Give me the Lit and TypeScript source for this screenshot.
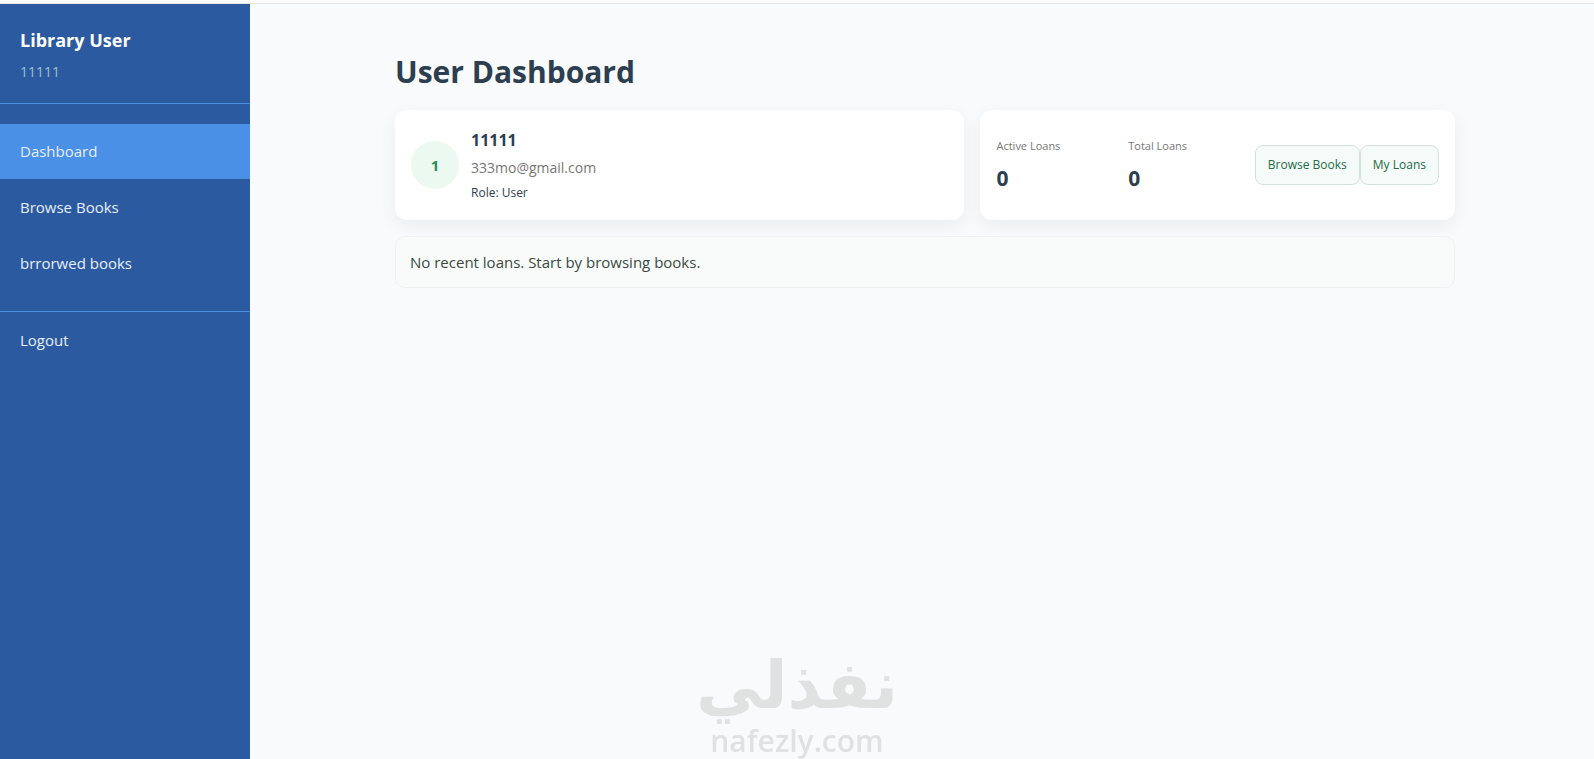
import { LitElement, html, css } from "lit";
import { customElement, state } from "lit/decorators.js";

@customElement("app-root")
export class AppRoot extends LitElement {
  @state() private active = "Dashboard";

  private links = ["Dashboard", "Browse Books", "brrorwed books"];

  static styles = css`
    :host {
      display: flex;
      flex-direction: column;
      min-height: 100vh;
      box-sizing: border-box;
      border-top: 3px solid #fbfbfc;
      background: #f9fafc;
      color: #2c3e50;
      font: 15px/24px "Open Sans", "Noto Sans", sans-serif;
    }
    * {
      box-sizing: border-box;
      margin: 0;
    }
    .shell {
      display: flex;
      flex: 1;
      border-top: 1px solid #e4e5e7;
    }
    .sidebar {
      width: 250px;
      flex: none;
      background: #2c5aa0;
      color: #e6eefa;
    }
    .head {
      padding: 24px 20px 20px;
      border-bottom: 1px solid #4a90e2;
    }
    .brand {
      color: #fff;
      font-size: 18px;
      line-height: 24px;
      font-weight: 700;
    }
    .uid {
      margin-top: 8px;
      font-size: 14px;
      line-height: 23px;
      color: #9cc0cf;
    }
    .nav {
      display: flex;
      flex-direction: column;
      gap: 1px;
      padding: 20px 0;
    }
    .link {
      display: block;
      padding: 16px 20px;
      line-height: 23px;
      color: inherit;
      text-decoration: none;
    }
    .link.on {
      background: #4a90e6;
    }
    .foot {
      border-top: 1px solid #4a90e2;
    }
    .foot .link {
      width: 100%;
      border: 0;
      background: none;
      font: inherit;
      text-align: left;
      cursor: pointer;
    }
    .main {
      flex: 1;
      min-width: 0;
      padding: 46px 20px 20px 26px;
    }
    .content {
      max-width: 1060px;
      margin: 0 auto;
      display: flex;
      flex-direction: column;
      gap: 16px;
    }
    .title {
      font-size: 30px;
      line-height: 44px;
      font-weight: 700;
    }
    .cards {
      display: grid;
      grid-template-columns: 6fr 5fr;
      gap: 16px;
    }
    .card {
      display: flex;
      align-items: center;
      min-height: 110px;
      padding: 16px;
      border-radius: 12px;
      background: #fff;
      box-shadow: 0 6px 18px rgba(0, 0, 0, 0.06);
    }
    .profile {
      gap: 12px;
    }
    .avatar {
      display: grid;
      place-items: center;
      width: 48px;
      height: 48px;
      border-radius: 50%;
      background: #ebf9f0;
      color: #2e8b57;
      font-weight: 700;
    }
    .name {
      font-size: 16px;
      line-height: 28px;
      font-weight: 700;
    }
    .mail {
      font-size: 14px;
      line-height: 28px;
      color: #777;
    }
    .role {
      font-size: 12px;
      line-height: 22px;
    }
    .stats {
      justify-content: space-between;
    }
    .label {
      font-size: 11px;
      line-height: 26px;
      color: #777;
    }
    .value {
      font-size: 21px;
      line-height: 38px;
      font-weight: 700;
    }
    .actions {
      display: flex;
    }
    .btn {
      padding: 8px 12px;
      border: 1px solid #d3e3db;
      border-radius: 8px;
      background: #f5fbf8;
      color: #236b47;
      font: 12px/22px "Open Sans", "Noto Sans", sans-serif;
      white-space: nowrap;
      cursor: pointer;
    }
    .empty {
      padding: 13px 14px;
      border: 1px solid #eff2f2;
      border-radius: 10px;
      background: #f9fbfa;
      color: #3a4a42;
    }
    .mark {
      position: fixed;
      left: 50%;
      bottom: 0;
      transform: translateX(-50%);
      text-align: center;
      color: #e0e1e1;
      pointer-events: none;
      white-space: nowrap;
    }
    .mark-ar {
      font: 700 66px/74px "DejaVu Sans", sans-serif;
    }
    .mark-en {
      font: 600 30px/36px "Open Sans", sans-serif;
    }
  `;

  render() {
    return html`
      <div class="shell">
        <aside class="sidebar">
          <div class="head">
            <h2 class="brand">Library User</h2>
            <p class="uid">11111</p>
          </div>
          <nav class="nav">
            ${this.links.map(
              (name) => html`<a
                class="link ${name === this.active ? "on" : ""}"
                href="#"
                @click=${(e: Event) => {
                  e.preventDefault();
                  this.active = name;
                }}
                >${name}</a
              >`
            )}
          </nav>
          <div class="foot"><button class="link">Logout</button></div>
        </aside>
        <main class="main">
          <div class="content">
            <h1 class="title">User Dashboard</h1>
            <div class="cards">
              <section class="card profile">
                <div class="avatar">1</div>
                <div>
                  <p class="name">11111</p>
                  <p class="mail">333mo@gmail.com</p>
                  <p class="role">Role: User</p>
                </div>
              </section>
              <section class="card stats">
                <div>
                  <p class="label">Active Loans</p>
                  <p class="value">0</p>
                </div>
                <div>
                  <p class="label">Total Loans</p>
                  <p class="value">0</p>
                </div>
                <div class="actions">
                  <button class="btn">Browse Books</button>
                  <button class="btn">My Loans</button>
                </div>
              </section>
            </div>
            <p class="empty">No recent loans. Start by browsing books.</p>
          </div>
        </main>
      </div>
      <div class="mark">
        <div class="mark-ar" lang="ar" dir="rtl">نفذلي</div>
        <div class="mark-en">nafezly.com</div>
      </div>
    `;
  }
}
